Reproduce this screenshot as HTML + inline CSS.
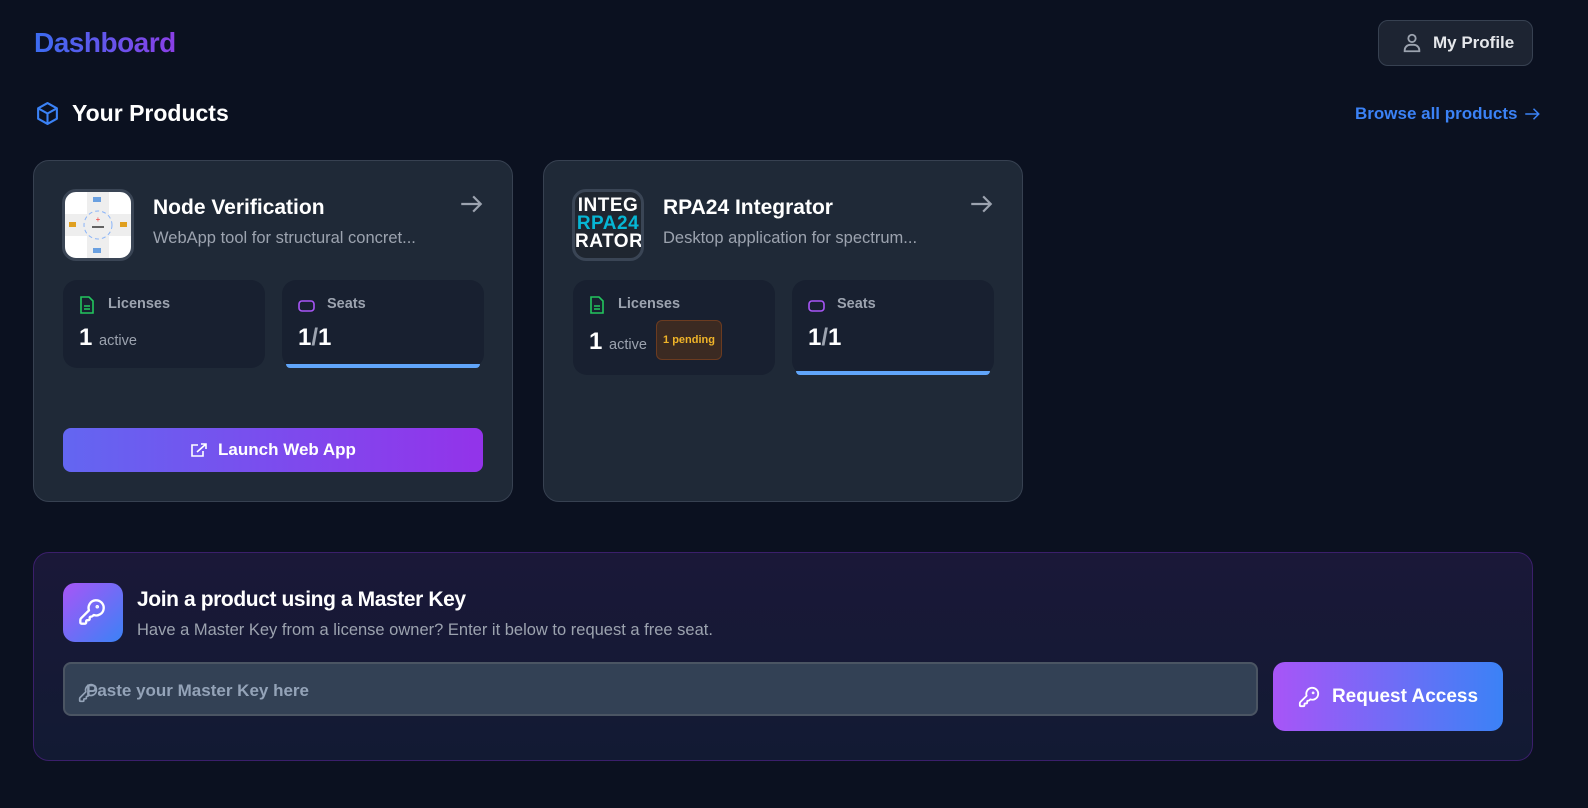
<!DOCTYPE html>
<html><head><meta charset="utf-8"><style>
*{box-sizing:border-box;margin:0;padding:0}
body{width:1588px;height:808px;background:#0b1120;font-family:"Liberation Sans",sans-serif;color:#fff;position:relative;overflow:hidden}
.abs{position:absolute}
.dash{left:34px;top:27px;font-size:28px;font-weight:bold;background:linear-gradient(90deg,#3b6cf0,#8b3fe6);-webkit-background-clip:text;color:transparent;letter-spacing:-0.5px}
.prof{left:1378px;top:20px;width:155px;height:46px;border:1px solid #374151;border-radius:10px;background:#1d2432;display:flex;align-items:center;padding-left:22px;font-size:17px;font-weight:bold;color:#e5e7eb}
.card{background:#1f2937;border:1px solid #374151;border-radius:16px;width:480px;height:342px;top:160px}
.ic{width:72px;height:72px;border-radius:14px;border:3px solid #3a4555;left:28px;top:28px;overflow:hidden}
.title{left:119px;top:35px;font-size:21px;font-weight:bold}
.desc{left:119px;top:68px;font-size:16.5px;color:#9ca3af}
.arr{left:424px;top:30px}
.stat{background:#182030;border-radius:14px;width:202px;height:88px;top:119px}
.lab{left:45px;top:16px;font-size:14.5px;color:#9ca3af;font-weight:bold}
.big{left:16px;top:44px;font-size:24px;font-weight:bold}
.small{font-size:14.5px;color:#9ca3af;font-weight:normal}
.bar{left:4px;right:4px;bottom:0;height:4px;background:#60a5fa;border-radius:0 0 4px 4px}
</style></head><body>
<div class="abs dash">Dashboard</div>
<div class="abs prof"><svg width="22" height="22" viewBox="0 0 24 24" fill="none" stroke="#9ca3af" stroke-width="2"><circle cx="12" cy="7" r="4"/><path d="M4 21v-1a6 6 0 0 1 6-6h4a6 6 0 0 1 6 6v1z"/></svg><span style="margin-left:10px">My Profile</span></div>
<svg class="abs" style="left:35px;top:101px" width="25" height="25" viewBox="0 0 24 24" fill="none" stroke="#3b82f6" stroke-width="2" stroke-linejoin="round"><path d="M12 2l9 5v10l-9 5-9-5V7z"/><path d="M3 7l9 5 9-5M12 12v10"/></svg>
<div class="abs" style="left:72px;top:100px;font-size:23px;font-weight:bold">Your Products</div>
<div class="abs" style="left:1355px;top:104px;font-size:17px;font-weight:bold;color:#3b82f6;display:flex;align-items:center">Browse all products<svg style="margin-left:6px" width="18" height="18" viewBox="0 0 24 24" fill="none" stroke="#3b82f6" stroke-width="2"><path d="M3 12h18M14 5l7 7-7 7"/></svg></div>

<div class="abs card" style="left:33px">
 <div class="abs ic" style="background:#fff"><svg width="66" height="66" viewBox="0 0 66 66"><rect x="22" y="0" width="22" height="66" fill="#eee"/><rect x="0" y="22" width="66" height="22" fill="#eee"/><circle cx="33" cy="33" r="14" fill="none" stroke="#8ab4f8" stroke-dasharray="4 3"/><path d="M27 35h12" stroke="#333" stroke-width="1.5"/><text x="33" y="30" font-size="8" fill="#e33" text-anchor="middle">+</text><rect x="28" y="5" width="8" height="5" fill="#6aa0e0"/><rect x="28" y="56" width="8" height="5" fill="#6aa0e0"/><rect x="4" y="30" width="7" height="5" fill="#e0a020"/><rect x="55" y="30" width="7" height="5" fill="#e0a020"/></svg></div>
 <div class="abs title">Node Verification</div>
 <div class="abs desc">WebApp tool for structural concret...</div>
 <svg class="abs arr" width="26" height="26" viewBox="0 0 24 24" fill="none" stroke="#9ca3af" stroke-width="2"><path d="M3 12h18M14 5l7 7-7 7"/></svg>
 <div class="abs stat" style="left:29px"><svg class="abs" style="left:16px;top:16px" width="16" height="18" viewBox="0 0 16 18" fill="none" stroke="#22c55e" stroke-width="1.6"><path d="M2 1h8l4 4v12H2z"/><path d="M5 10h6M5 13h6"/></svg><div class="abs lab">Licenses</div><div class="abs big">1 <span class="small">active</span></div></div>
 <div class="abs stat" style="left:248px"><svg class="abs" style="left:16px;top:20px" width="17" height="12"><rect x="1" y="1" width="15" height="10" rx="3" fill="none" stroke="#a855f7" stroke-width="1.6"/></svg><div class="abs lab">Seats</div><div class="abs big">1<span style="color:#9ca3af">/</span>1</div><div class="abs bar"></div></div>
 <div class="abs" style="left:29px;top:267px;width:420px;height:44px;border-radius:8px;background:linear-gradient(90deg,#6366f1,#9333ea);display:flex;align-items:center;justify-content:center;font-size:17px;font-weight:bold"><svg width="18" height="16" viewBox="0 0 18 16" fill="none" stroke="#fff" stroke-width="1.6"><path d="M8 3H2v11h11V9"/><path d="M7 10l9-8M11 2h5v5"/></svg><span style="margin-left:10px">Launch Web App</span></div>
</div>

<div class="abs card" style="left:543px">
 <div class="abs ic" style="background:#1f2630;text-align:center;font-weight:bold;font-size:19px;line-height:18px;padding-top:5px;letter-spacing:0.5px">INTEG<br><span style="color:#06b6d4">RPA24</span><br>RATOR</div>
 <div class="abs title">RPA24 Integrator</div>
 <div class="abs desc">Desktop application for spectrum...</div>
 <svg class="abs arr" width="26" height="26" viewBox="0 0 24 24" fill="none" stroke="#9ca3af" stroke-width="2"><path d="M3 12h18M14 5l7 7-7 7"/></svg>
 <div class="abs stat" style="left:29px;height:95px"><svg class="abs" style="left:16px;top:16px" width="16" height="18" viewBox="0 0 16 18" fill="none" stroke="#22c55e" stroke-width="1.6"><path d="M2 1h8l4 4v12H2z"/><path d="M5 10h6M5 13h6"/></svg><div class="abs lab">Licenses</div><div class="abs big" style="top:48px">1 <span class="small">active</span></div><div class="abs" style="left:83px;top:40px;width:66px;height:40px;background:#3b2a22;border:1px solid #6b3b20;border-radius:6px;color:#f0b429;font-size:11px;font-weight:bold;display:flex;align-items:center;justify-content:center">1 pending</div></div>
 <div class="abs stat" style="left:248px;height:95px"><svg class="abs" style="left:16px;top:20px" width="17" height="12"><rect x="1" y="1" width="15" height="10" rx="3" fill="none" stroke="#a855f7" stroke-width="1.6"/></svg><div class="abs lab">Seats</div><div class="abs big">1<span style="color:#9ca3af">/</span>1</div><div class="abs bar"></div></div>
</div>

<div class="abs" style="left:33px;top:552px;width:1500px;height:209px;border:1px solid #3b1f6b;border-radius:16px;background:linear-gradient(180deg,#1a1838,#121a33)">
 <div class="abs" style="left:29px;top:30px;width:60px;height:59px;border-radius:12px;background:linear-gradient(135deg,#a855f7,#3b82f6)"><svg style="margin:15px" width="28" height="28" viewBox="0 0 24 24" fill="none" stroke="#fff" stroke-width="2" stroke-linecap="round" stroke-linejoin="round"><path d="M2.586 17.414A2 2 0 0 0 2 18.828V21a1 1 0 0 0 1 1h3a1 1 0 0 0 1-1v-1a1 1 0 0 1 1-1h1a1 1 0 0 0 1-1v-1a1 1 0 0 1 1-1h.172a2 2 0 0 0 1.414-.586l.814-.814a6.5 6.5 0 1 0-4-4z"/><circle cx="16.5" cy="7.5" r=".5" fill="#fff"/></svg></div>
 <div class="abs" style="left:103px;top:35px;font-size:21px;font-weight:bold;letter-spacing:-0.4px">Join a product using a Master Key</div>
 <div class="abs" style="left:103px;top:68px;font-size:16.5px;color:#9ca3af">Have a Master Key from a license owner? Enter it below to request a free seat.</div>
 <div class="abs" style="left:29px;top:109px;width:1195px;height:54px;background:#334155;border:2px solid #4b5563;border-radius:8px;font-size:17px;color:#94a3b8;font-weight:bold;padding:17px 0 0 21px">Paste your Master Key here</div>
 <svg class="abs" style="left:44px;top:130px" width="20" height="20" viewBox="0 0 24 24" fill="none" stroke="#94a3b8" stroke-width="2" stroke-linecap="round" stroke-linejoin="round"><path d="M2.586 17.414A2 2 0 0 0 2 18.828V21a1 1 0 0 0 1 1h3a1 1 0 0 0 1-1v-1a1 1 0 0 1 1-1h1a1 1 0 0 0 1-1v-1a1 1 0 0 1 1-1h.172a2 2 0 0 0 1.414-.586l.814-.814a6.5 6.5 0 1 0-4-4z"/></svg>
 <div class="abs" style="left:1239px;top:109px;width:230px;height:69px;border-radius:12px;background:linear-gradient(90deg,#a855f7,#3b82f6);display:flex;align-items:center;justify-content:center;font-size:19px;font-weight:bold"><svg width="22" height="22" viewBox="0 0 24 24" fill="none" stroke="#fff" stroke-width="2" stroke-linecap="round" stroke-linejoin="round"><path d="M2.586 17.414A2 2 0 0 0 2 18.828V21a1 1 0 0 0 1 1h3a1 1 0 0 0 1-1v-1a1 1 0 0 1 1-1h1a1 1 0 0 0 1-1v-1a1 1 0 0 1 1-1h.172a2 2 0 0 0 1.414-.586l.814-.814a6.5 6.5 0 1 0-4-4z"/><circle cx="16.5" cy="7.5" r=".5" fill="#fff"/></svg><span style="margin-left:12px">Request Access</span></div>
</div>
</body></html>
